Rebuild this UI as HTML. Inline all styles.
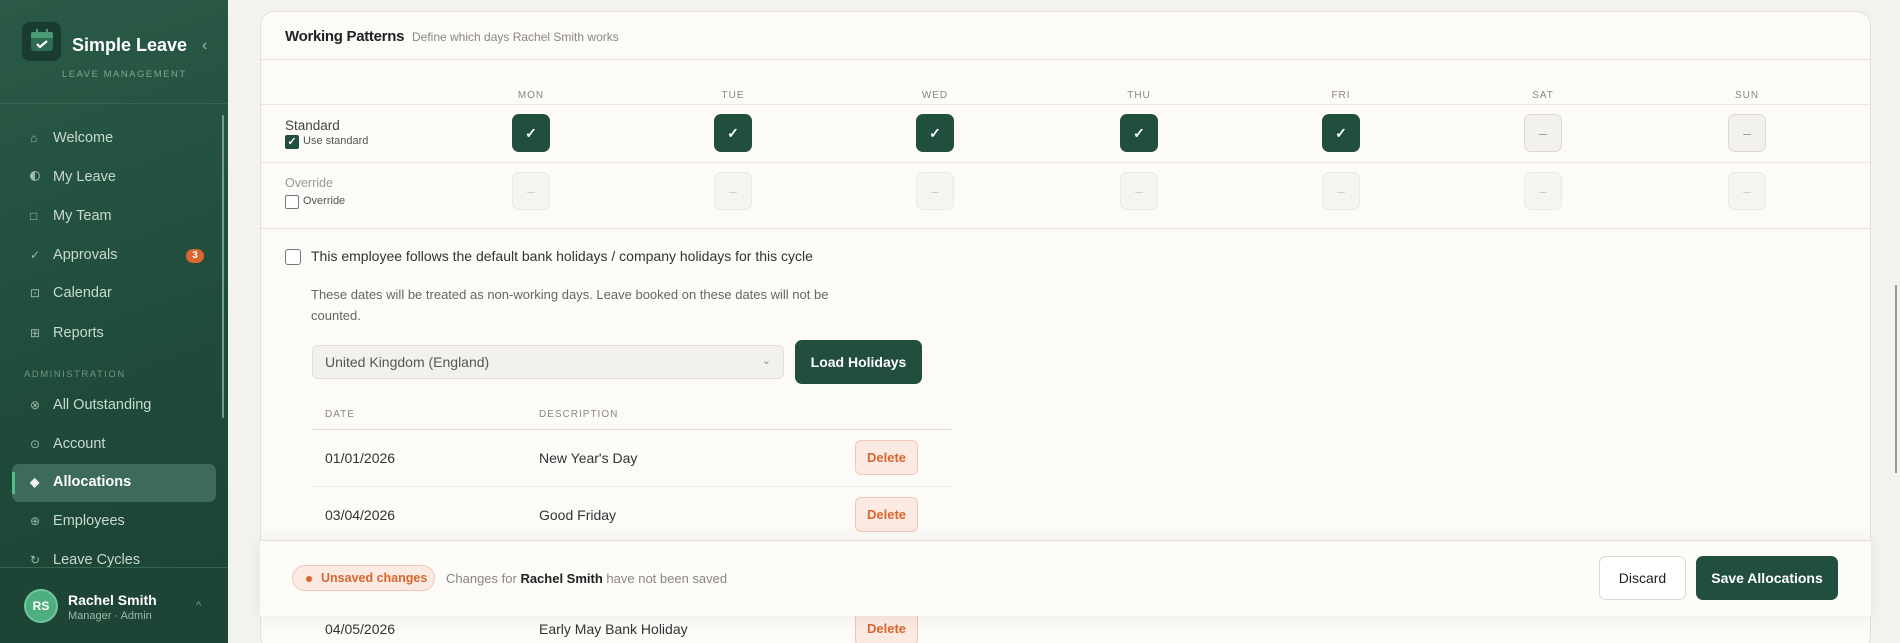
<!DOCTYPE html>
<html><head><meta charset="utf-8"><style>
*{box-sizing:border-box;margin:0;padding:0}
html,body{width:1900px;height:643px;overflow:hidden}
body{background:#f4f2ee;font-family:"Liberation Sans",sans-serif;position:relative;color:#2a2a28}
.a{position:absolute}
.sb{left:0;top:0;width:228px;height:643px;background:linear-gradient(160deg,#2a5a47 0%,#1f4a3a 60%,#1c4334 100%)}
.nav{position:absolute;left:30px;font-size:14.5px;color:#c9d9d0;display:flex;align-items:center}
.nav i{font-style:normal;width:19px;font-size:12px;color:#9fb8ab;display:inline-block}
.card{left:260px;top:11px;width:1611px;height:640px;background:#fcfbf8;border:1px solid #e4e0d9;border-radius:14px}
.hl{position:absolute;left:0;right:0;height:1px;background:#ebe7e0}
.day{position:absolute;top:78px;font-size:10px;letter-spacing:1px;color:#8a8780;width:60px;text-align:center}
.bx{position:absolute;width:38px;height:38px;border-radius:7px;display:flex;align-items:center;justify-content:center;font-size:14px}
.on{background:#214e3d;color:#fff;font-weight:bold}
.off{background:#f3f1ed;border:1px solid #ddd9d2;color:#999}
.dis{background:#f6f4f0;border:1px solid #ebe8e2;color:#ccc}
.del{position:absolute;width:63px;height:35px;border:1px solid #f0c9b6;background:#fbeae1;color:#d9662f;border-radius:6px;font-size:13px;display:flex;align-items:center;justify-content:center;font-weight:bold}
.td{position:absolute;font-size:14px;color:#333}
</style></head><body>
<div class="a sb">
 <div class="a" style="left:22px;top:22px;width:39px;height:39px;background:#1a3b2f;border-radius:8px"></div>
 <svg class="a" style="left:29px;top:27px" width="26" height="26" viewBox="0 0 26 26"><rect x="2" y="5" width="22" height="19" rx="3" fill="#2f6a52"/><rect x="2" y="5" width="22" height="6" rx="2" fill="#4a9a76"/><rect x="7" y="2" width="2" height="6" fill="#4a9a76"/><rect x="17" y="2" width="2" height="6" fill="#4a9a76"/><path d="M8 17l3 3 7-6" stroke="#fff" stroke-width="2.2" fill="none"/></svg>
 <div class="a" style="left:72px;top:35px;font-size:18px;font-weight:bold;color:#fff">Simple Leave</div>
 <div class="a" style="left:202px;top:37px;font-size:16px;color:#9fb8ab">‹</div>
 <div class="a" style="left:62px;top:69px;font-size:9.5px;letter-spacing:1.5px;color:#7ea592">LEAVE MANAGEMENT</div>
 <div class="a" style="left:0;top:103px;width:228px;height:1px;background:#386552"></div>
 <div class="a" style="left:222px;top:115px;width:2px;height:303px;background:#7a9a8b;border-radius:1px"></div>
 <div class="nav" style="top:130px"><i>⌂</i>&nbsp;Welcome</div>
 <div class="nav" style="top:169px"><i><span style="display:inline-block;width:10px;height:10px;border-radius:50%;border:1.5px solid #9fb8ab;background:linear-gradient(90deg,#9fb8ab 50%,transparent 50%)"></span></i>&nbsp;My Leave</div>
 <div class="nav" style="top:208px"><i>□</i>&nbsp;My Team</div>
 <div class="nav" style="top:247px"><i>✓</i>&nbsp;Approvals</div>
 <div class="a" style="left:186px;top:249px;width:18px;height:14px;border-radius:7px;background:#d9662f;color:#fff;font-size:10px;font-weight:bold;text-align:center;line-height:14px">3</div>
 <div class="nav" style="top:285px"><i>⊡</i>&nbsp;Calendar</div>
 <div class="nav" style="top:325px"><i>⊞</i>&nbsp;Reports</div>
 <div class="a" style="left:24px;top:369px;font-size:9.5px;letter-spacing:1.5px;color:#6f9583">ADMINISTRATION</div>
 <div class="nav" style="top:397px"><i>⊗</i>&nbsp;All Outstanding</div>
 <div class="nav" style="top:436px"><i>⊙</i>&nbsp;Account</div>
 <div class="a" style="left:12px;top:464px;width:204px;height:38px;background:#3d6a5a;border-radius:7px"></div>
 <div class="a" style="left:12px;top:472px;width:3px;height:22px;background:#4fbf8a"></div>
 <div class="nav" style="top:474px;color:#fff;font-weight:bold"><i style="color:#fff">◈</i>&nbsp;Allocations</div>
 <div class="nav" style="top:513px"><i>⊕</i>&nbsp;Employees</div>
 <div class="nav" style="top:552px"><i>↻</i>&nbsp;Leave Cycles</div>
 <div class="a" style="left:0;top:567px;width:228px;height:76px;background:#1e4436;border-top:1px solid #386552"></div>
 <div class="a" style="left:24px;top:589px;width:34px;height:34px;border-radius:50%;background:#4fae80;border:2px solid #6cc79b;color:#fff;font-size:12px;font-weight:bold;text-align:center;line-height:30px">RS</div>
 <div class="a" style="left:68px;top:592px;font-size:14px;font-weight:bold;color:#fff">Rachel Smith</div>
 <div class="a" style="left:68px;top:610px;font-size:11px;color:#9fb8ab">Manager · Admin</div>
 <div class="a" style="left:196px;top:600px;font-size:11px;color:#7ea592">^</div>
</div>
<div class="a card">
 <div class="a" style="left:24px;top:16px;font-size:15px;font-weight:bold;color:#222;letter-spacing:-0.3px">Working Patterns <span style="font-weight:normal;font-size:12px;color:#8a8780;margin-left:4px;letter-spacing:0">Define which days Rachel Smith works</span></div>
 <div class="hl" style="top:47px;background:#e4e0d9"></div>
 <div class="day" style="left:240px">MON</div><div class="day" style="left:442px">TUE</div><div class="day" style="left:644px">WED</div><div class="day" style="left:848px">THU</div><div class="day" style="left:1050px">FRI</div><div class="day" style="left:1252px">SAT</div><div class="day" style="left:1456px">SUN</div>
 <div class="hl" style="top:92px"></div>
 <div class="a" style="left:24px;top:106px;font-size:13.5px;color:#444">Standard</div>
 <div class="a" style="left:24px;top:123px;width:14px;height:14px;background:#214e3d;border-radius:2px;color:#fff;font-size:11px;text-align:center;line-height:14px;font-weight:bold">✓</div>
 <div class="a" style="left:42px;top:123px;font-size:11px;color:#555">Use standard</div>
 <div class="bx on" style="left:251px;top:102px">✓</div><div class="bx on" style="left:453px;top:102px">✓</div><div class="bx on" style="left:655px;top:102px">✓</div><div class="bx on" style="left:859px;top:102px">✓</div><div class="bx on" style="left:1061px;top:102px">✓</div><div class="bx off" style="left:1263px;top:102px">–</div><div class="bx off" style="left:1467px;top:102px">–</div>
 <div class="hl" style="top:150px"></div>
 <div class="a" style="left:24px;top:164px;font-size:12.5px;color:#999">Override</div>
 <div class="a" style="left:24px;top:183px;width:14px;height:14px;border:1px solid #777;border-radius:2px;background:#fff"></div>
 <div class="a" style="left:42px;top:183px;font-size:11px;color:#555">Override</div>
 <div class="bx dis" style="left:251px;top:160px">–</div><div class="bx dis" style="left:453px;top:160px">–</div><div class="bx dis" style="left:655px;top:160px">–</div><div class="bx dis" style="left:859px;top:160px">–</div><div class="bx dis" style="left:1061px;top:160px">–</div><div class="bx dis" style="left:1263px;top:160px">–</div><div class="bx dis" style="left:1467px;top:160px">–</div>
 <div class="hl" style="top:216px;background:#e4e0d9"></div>
 <div class="a" style="left:24px;top:237px;width:16px;height:16px;border:1px solid #777;border-radius:3px;background:#fff"></div>
 <div class="a" style="left:50px;top:236px;font-size:14px;color:#333">This employee follows the default bank holidays / company holidays for this cycle</div>
 <div class="a" style="left:50px;top:272px;width:560px;font-size:13px;line-height:21px;color:#666">These dates will be treated as non-working days. Leave booked on these dates will not be counted.</div>
 <div class="a" style="left:51px;top:333px;width:472px;height:34px;background:#f3f1ed;border:1px solid #e2ded7;border-radius:6px;font-size:14px;color:#555;padding:8px 12px">United Kingdom (England)<span style="position:absolute;right:12px;top:8px;color:#888;font-size:11px">⌄</span></div>
 <div class="a" style="left:534px;top:328px;width:127px;height:44px;background:#214e3d;border-radius:7px;color:#fff;font-weight:bold;font-size:14px;text-align:center;line-height:44px">Load Holidays</div>
 <div class="a" style="left:64px;top:397px;font-size:10px;letter-spacing:1px;color:#8a8780">DATE</div>
 <div class="a" style="left:278px;top:397px;font-size:10px;letter-spacing:1px;color:#8a8780">DESCRIPTION</div>
 <div class="a" style="left:51px;top:417px;width:640px;height:1px;background:#e2ded7"></div>
 <div class="td" style="left:64px;top:438px">01/01/2026</div><div class="td" style="left:278px;top:438px">New Year's Day</div><div class="del" style="left:594px;top:428px">Delete</div>
 <div class="a" style="left:51px;top:474px;width:640px;height:1px;background:#efece6"></div>
 <div class="td" style="left:64px;top:495px">03/04/2026</div><div class="td" style="left:278px;top:495px">Good Friday</div><div class="del" style="left:594px;top:485px">Delete</div>
 <div class="td" style="left:64px;top:609px">04/05/2026</div><div class="td" style="left:278px;top:609px">Early May Bank Holiday</div><div class="del" style="left:594px;top:599px">Delete</div>
</div>
<div class="a" style="left:260px;top:540px;width:1611px;height:76px;background:#fcfbf8;border-top:1px solid #e2ded7;box-shadow:0 -6px 14px rgba(0,0,0,0.04),0 6px 12px rgba(0,0,0,0.04)">
 <div class="a" style="left:32px;top:24px;width:143px;height:26px;border:1px solid #f0c9b6;background:#fbeae1;border-radius:13px;color:#d9662f;font-size:12.5px;font-weight:bold;line-height:24px;padding-left:28px">Unsaved changes<span style="position:absolute;left:13px;top:10px;width:6px;height:6px;border-radius:50%;background:#d9662f"></span></div>
 <div class="a" style="left:186px;top:30px;font-size:13px;color:#8a8780">Changes for <b style="color:#222">Rachel Smith</b> have not been saved</div>
 <div class="a" style="left:1339px;top:15px;width:87px;height:44px;border:1px solid #ddd9d2;border-radius:7px;background:#fff;font-size:14px;text-align:center;line-height:42px;color:#222">Discard</div>
 <div class="a" style="left:1436px;top:15px;width:142px;height:44px;background:#214e3d;border-radius:7px;color:#fff;font-size:14px;font-weight:bold;text-align:center;line-height:44px">Save Allocations</div>
</div>
<div class="a" style="left:1895px;top:285px;width:2px;height:188px;background:#999"></div>
</body></html>
